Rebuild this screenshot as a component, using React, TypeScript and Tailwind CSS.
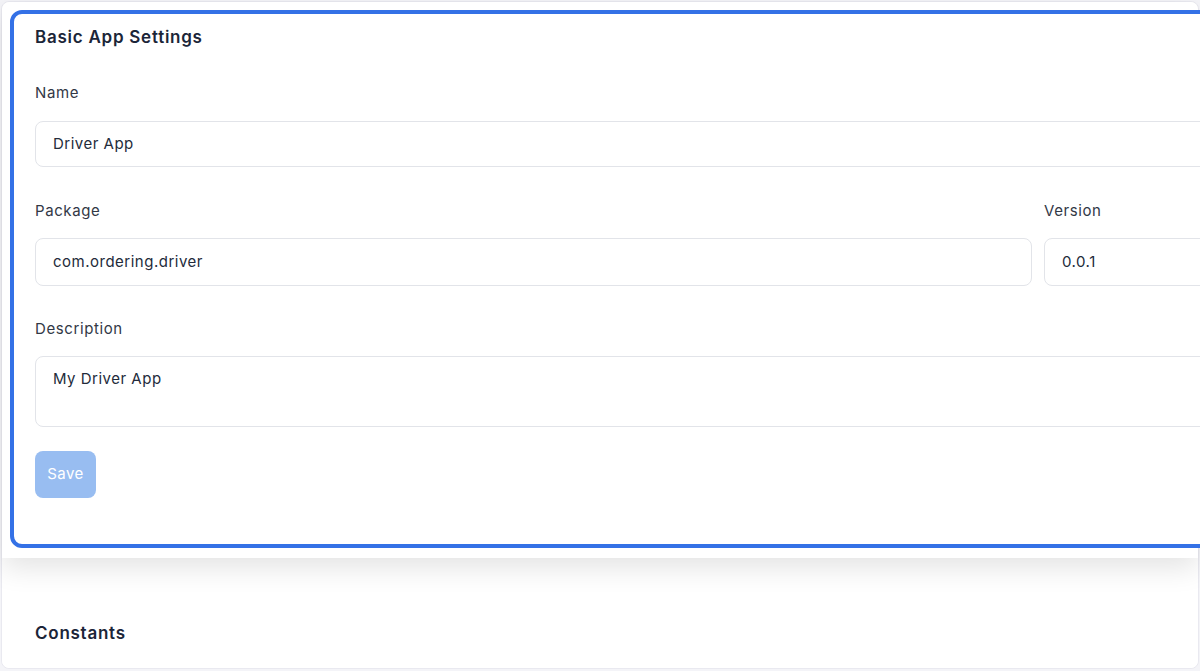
import React from "react";

const font = { fontFamily: "Inter, 'Noto Sans', sans-serif" };

function Label({ children }: { children: React.ReactNode }) {
  return <div className="text-[15px] leading-5 tracking-[0.6px] text-[#323846] h-5">{children}</div>;
}

export default function App() {
  return (
    <div className="w-full h-[671px] overflow-hidden bg-[#f4f4f8] pt-px pl-px" style={font}>
      <div className="w-[1198px] h-[668px] bg-white border border-[#e9e9f0] rounded-lg">
        <div className="h-[556px] bg-white rounded-t-lg pt-[8px] pl-[8px] shadow-[0_10px_28px_rgba(0,0,0,0.11)]">
          <div className="w-[1240px] border-4 border-[#3471e6] rounded-xl bg-white pl-[21px] pt-[11px] pb-[46px]">
            <div className="text-[17px] leading-6 font-semibold tracking-[0.75px] text-[#1b2538]">Basic App Settings</div>
            <div className="mt-[34px]">
              <Label>Name</Label>
              <div className="mt-[18px] h-[46px] w-[1188px] border border-[#e2e4e9] rounded-lg flex items-center pl-[17px] text-[15px] tracking-[0.5px] text-[#232b3b]">
                Driver App
              </div>
            </div>
            <div className="mt-[34px] flex gap-3">
              <div className="w-[997px]">
                <Label>Package</Label>
                <div className="mt-[17px] h-[48px] border border-[#e2e4e9] rounded-lg flex items-center pl-[17px] text-[15px] tracking-[0.5px] text-[#232b3b]">
                  com.ordering.driver
                </div>
              </div>
              <div className="w-[180px]">
                <Label>Version</Label>
                <div className="mt-[17px] h-[48px] border border-[#e2e4e9] rounded-lg flex items-center pl-[17px] text-[15px] tracking-[0.5px] text-[#232b3b]">
                  0.0.1
                </div>
              </div>
            </div>
            <div className="mt-[33px]">
              <Label>Description</Label>
              <div className="mt-[17px] h-[71px] w-[1188px] border border-[#e2e4e9] rounded-lg pl-[17px] pt-[12px] text-[15px] leading-5 tracking-[0.5px] text-[#232b3b]">
                My Driver App
              </div>
            </div>
            <button className="mt-[24px] h-[47px] w-[61px] rounded-lg bg-[#98bdf1] text-white text-[15px] tracking-[0.4px] flex items-center justify-center">
              Save
            </button>
          </div>
        </div>
        <div className="relative mt-[34px] h-[76px] bg-white rounded-b-lg pl-[33px] pt-[29px]">
          <div className="text-[17px] leading-6 font-semibold tracking-[0.75px] text-[#1b2538]">Constants</div>
        </div>
      </div>
    </div>
  );
}
